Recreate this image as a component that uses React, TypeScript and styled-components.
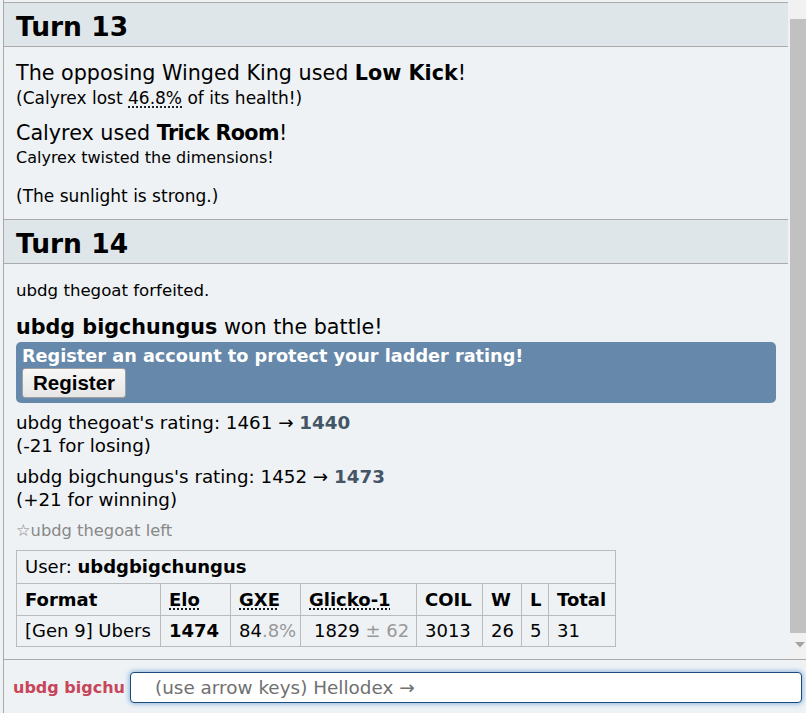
import React from "react";
import styled, { createGlobalStyle } from "styled-components";

const GlobalStyle = createGlobalStyle`
  html, body { margin: 0; padding: 0; background: #eef2f5; }
  body { font-family: Verdana, "DejaVu Sans", sans-serif; color: #000; }
  * { box-sizing: border-box; }
`;

const Screen = styled.div`
  width: 806px;
  height: 713px;
  padding-left: 3px;
  background: #eef2f5;
  overflow: hidden;
`;

const Frame = styled.div`
  height: 100%;
  border-left: 1px solid #aaa;
  display: flex;
  flex-direction: column;
`;

const LogRow = styled.div`
  height: 659px;
  display: flex;
  overflow: hidden;
`;

const Log = styled.div`
  flex: 1;
  min-width: 0;
  overflow: hidden;
  background: #eef2f5;
`;

const TurnHeader = styled.h2<{ $mt: number }>`
  margin: ${(p) => p.$mt}px 0 0;
  padding: 8px 12px 4px;
  line-height: 31px;
  font-size: 26.5px;
  font-weight: bold;
  background: #dfe6ea;
  border-top: 1px solid #aaa;
  border-bottom: 1px solid #aaa;
`;

const Body = styled.div`
  padding: 0 12px;
`;

const Line = styled.div<{ $fs: number; $lh: number; $mt?: number; $muted?: boolean }>`
  margin-top: ${(p) => p.$mt ?? 0}px;
  font-size: ${(p) => p.$fs}px;
  line-height: ${(p) => p.$lh}px;
  color: ${(p) => (p.$muted ? "#888" : "#000")};
  white-space: nowrap;
`;

const Move = styled.strong<{ $ls?: number }>`
  letter-spacing: ${(p) => p.$ls ?? 0}px;
`;

const Abbr = styled.abbr`
  text-decoration: underline dotted;
  text-underline-offset: 3px;
`;

const NewRating = styled.strong`
  color: #456;
`;

const RegisterBox = styled.div`
  margin-top: 2px;
  padding: 3px 6px 5px;
  border-radius: 5px;
  background: #6688aa;
`;

const RegisterTitle = styled.div`
  color: #fff;
  font-size: 17.7px;
  font-weight: bold;
  line-height: 22px;
  white-space: nowrap;
`;

const RegisterButton = styled.button`
  display: block;
  margin-top: 1px;
  width: 104px;
  height: 30px;
  padding: 0;
  font-family: "Liberation Sans", Arial, sans-serif;
  font-size: 20.5px;
  font-weight: bold;
  color: #000;
  background: linear-gradient(#f7f7f7, #e6e6e6);
  border: 1px solid #a0a0a0;
  border-radius: 3px;
`;

const StatsTable = styled.table`
  margin-top: 8px;
  width: 600px;
  table-layout: fixed;
  border-collapse: collapse;
  font-size: 18px;
`;

const Col = styled.col<{ $w: number }>`
  width: ${(p) => p.$w}px;
`;

const Row = styled.tr<{ $h: number }>`
  height: ${(p) => p.$h}px;
`;

const Cell = styled.td`
  border: 1px solid #bbb;
  padding: 0 8px;
  line-height: 22px;
  white-space: nowrap;
  vertical-align: middle;
`;

const HeadCell = styled.th`
  border: 1px solid #bbb;
  padding: 0 8px;
  line-height: 22px;
  text-align: left;
  font-weight: bold;
  white-space: nowrap;
`;

const Dim = styled.span`
  color: #999;
`;

const Indent = styled.span`
  margin-left: 5px;
`;

const Scrollbar = styled.div`
  width: 18px;
  flex: none;
  background: #f1f1f1;
  padding: 19px 0 0 2px;
  display: flex;
  flex-direction: column;
`;

const Thumb = styled.div`
  height: 614px;
  background: #c1c1c1;
`;

const ArrowSlot = styled.div`
  padding: 9px 0 0 5px;
  display: flex;
`;

const ChatBar = styled.div`
  flex: 1;
  border-top: 1px solid #aaa;
  padding: 12px 0 0 9px;
  display: flex;
  align-items: flex-start;
`;

const ChatName = styled.div`
  width: 113px;
  overflow: hidden;
  white-space: nowrap;
  font-size: 16px;
  font-weight: bold;
  line-height: 31px;
  color: #c8465a;
`;

const ChatInput = styled.input`
  margin-left: 4px;
  width: 672px;
  height: 31px;
  padding: 0 8px 0 24px;
  border: 1px solid #1d4a7c;
  border-radius: 4px;
  background: #fff;
  box-shadow: 0 0 5px 1px #8fb4dc;
  font-family: Verdana, "DejaVu Sans", sans-serif;
  font-size: 18.4px;
  outline: none;
  &::placeholder { color: #707070; }
`;

export default function App() {
  return (
    <>
      <GlobalStyle />
      <Screen>
        <Frame>
          <LogRow>
            <Log>
              <TurnHeader $mt={2}>Turn 13</TurnHeader>
              <Body>
                <Line $fs={20.7} $lh={26} $mt={13}>
                  The opposing Winged King used <Move>Low Kick</Move>!
                </Line>
                <Line $fs={17} $lh={24}>
                  (Calyrex lost <Abbr>46.8%</Abbr> of its health!)
                </Line>
                <Line $fs={20.7} $lh={26} $mt={10}>
                  Calyrex used <Move $ls={-0.6}>Trick Room</Move>!
                </Line>
                <Line $fs={16} $lh={24}>
                  Calyrex twisted the dimensions!
                </Line>
                <Line $fs={17} $lh={24} $mt={14}>
                  (The sunlight is strong.)
                </Line>
              </Body>
              <TurnHeader $mt={11}>Turn 14</TurnHeader>
              <Body>
                <Line $fs={16.6} $lh={24} $mt={15}>
                  ubdg thegoat forfeited.
                </Line>
                <Line $fs={20.7} $lh={26} $mt={11}>
                  <strong>ubdg bigchungus</strong> won the battle!
                </Line>
                <RegisterBox>
                  <RegisterTitle>Register an account to protect your ladder rating!</RegisterTitle>
                  <RegisterButton>Register</RegisterButton>
                </RegisterBox>
                <Line $fs={18.3} $lh={23} $mt={8}>
                  ubdg thegoat's rating: 1461 → <NewRating>1440</NewRating>
                </Line>
                <Line $fs={18.3} $lh={23}>
                  (-21 for losing)
                </Line>
                <Line $fs={18.3} $lh={23} $mt={8}>
                  ubdg bigchungus's rating: 1452 → <NewRating>1473</NewRating>
                </Line>
                <Line $fs={18.3} $lh={23}>
                  (+21 for winning)
                </Line>
                <Line $fs={16.3} $lh={23} $mt={8} $muted>
                  ☆ubdg thegoat left
                </Line>
                <StatsTable>
                  <colgroup>
                    <Col $w={144} />
                    <Col $w={70} />
                    <Col $w={70} />
                    <Col $w={116} />
                    <Col $w={66} />
                    <Col $w={39} />
                    <Col $w={27} />
                    <Col $w={67} />
                  </colgroup>
                  <tbody>
                    <Row $h={33}>
                      <Cell colSpan={8}>
                        User: <strong>ubdgbigchungus</strong>
                      </Cell>
                    </Row>
                    <Row $h={32}>
                      <HeadCell>Format</HeadCell>
                      <HeadCell>
                        <Abbr>Elo</Abbr>
                      </HeadCell>
                      <HeadCell>
                        <Abbr>GXE</Abbr>
                      </HeadCell>
                      <HeadCell>
                        <Abbr>Glicko-1</Abbr>
                      </HeadCell>
                      <HeadCell>COIL</HeadCell>
                      <HeadCell>W</HeadCell>
                      <HeadCell>L</HeadCell>
                      <HeadCell>Total</HeadCell>
                    </Row>
                    <Row $h={31}>
                      <Cell>[Gen 9] Ubers</Cell>
                      <Cell>
                        <strong>1474</strong>
                      </Cell>
                      <Cell>
                        84<Dim>.8%</Dim>
                      </Cell>
                      <Cell>
                        <Indent>1829</Indent>
                        <Dim> ± 62</Dim>
                      </Cell>
                      <Cell>3013</Cell>
                      <Cell>26</Cell>
                      <Cell>5</Cell>
                      <Cell>31</Cell>
                    </Row>
                  </tbody>
                </StatsTable>
              </Body>
            </Log>
            <Scrollbar>
              <Thumb />
              <ArrowSlot>
                <svg width="10" height="6" viewBox="0 0 10 6">
                  <polygon points="0,0 10,0 5,5.5" fill="#a3a3a3" />
                </svg>
              </ArrowSlot>
            </Scrollbar>
          </LogRow>
          <ChatBar>
            <ChatName>ubdg bigchungus</ChatName>
            <ChatInput placeholder="(use arrow keys) Hellodex →" readOnly />
          </ChatBar>
        </Frame>
      </Screen>
    </>
  );
}
